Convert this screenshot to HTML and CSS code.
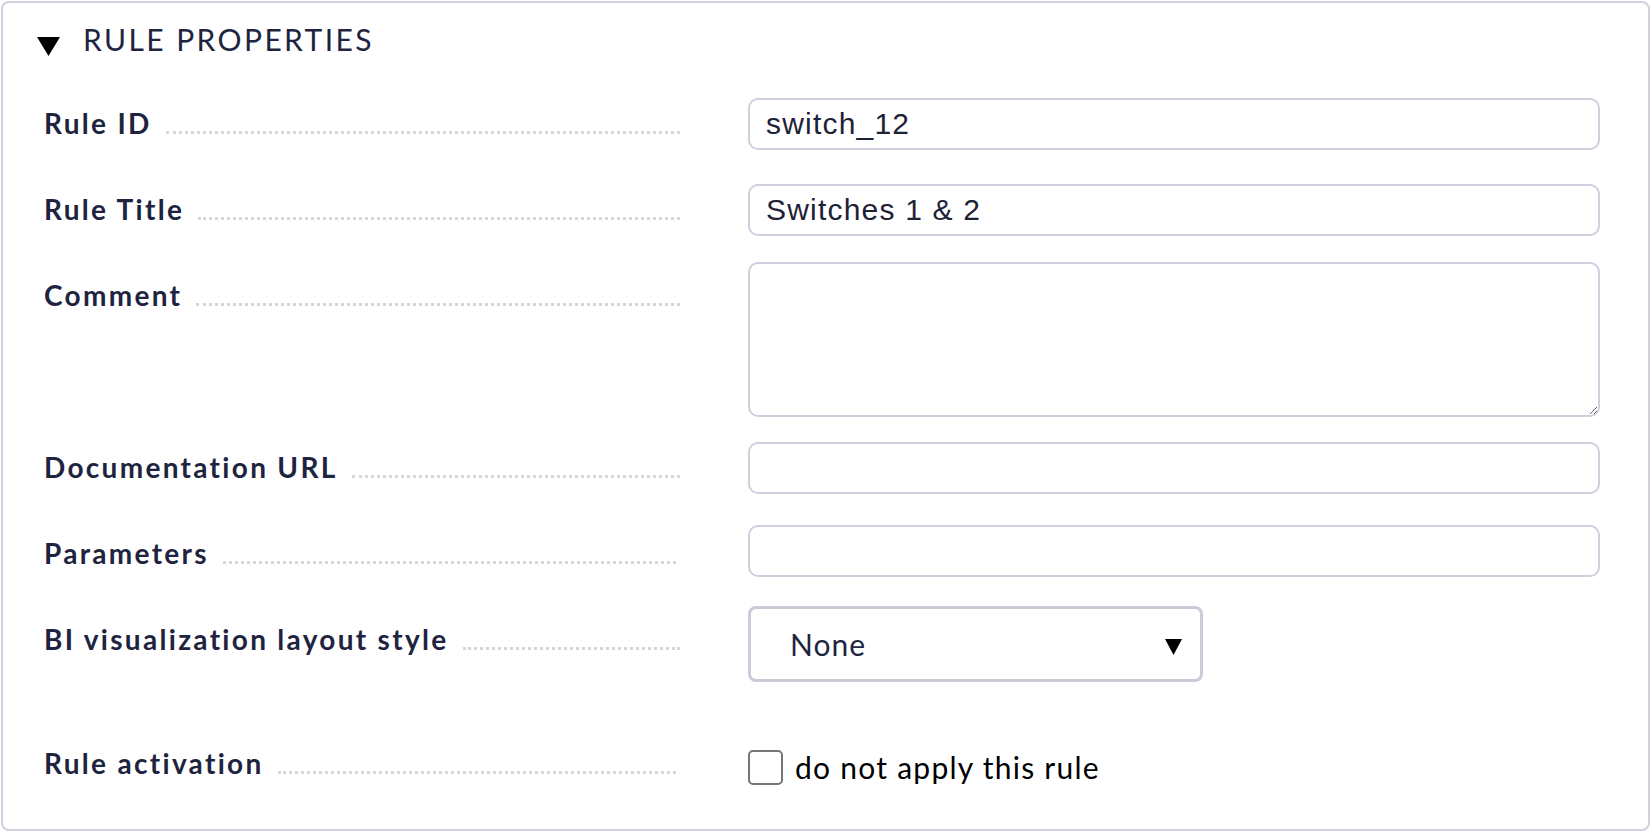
FILE: index.html
```html
<!DOCTYPE html>
<html lang="en">
<head>
<meta charset="utf-8">
<title>Rule properties</title>
<link rel="stylesheet" href="styles.css">
</head>
<body>
<div class="card">
  <div class="header">
    <svg class="caret" width="23" height="19" viewBox="0 0 23 19"><polygon points="0,0 23,0 11.5,19" fill="#000"/></svg>
    <span class="title">RULE PROPERTIES</span>
  </div>
  <div class="form">
    <div class="row">
      <div class="label"><span class="text">Rule ID</span><span class="leader"></span></div>
      <div class="field"><input class="input" type="text" value="switch_12"></div>
    </div>
    <div class="row">
      <div class="label"><span class="text">Rule Title</span><span class="leader"></span></div>
      <div class="field"><input class="input" type="text" value="Switches 1 &amp; 2"></div>
    </div>
    <div class="row row-tall">
      <div class="label"><span class="text">Comment</span><span class="leader"></span></div>
      <div class="field field-flush"><textarea class="textarea"></textarea></div>
    </div>
    <div class="row">
      <div class="label"><span class="text">Documentation URL</span><span class="leader"></span></div>
      <div class="field"><input class="input" type="text" value=""></div>
    </div>
    <div class="row">
      <div class="label label-short"><span class="text">Parameters</span><span class="leader"></span></div>
      <div class="field field-params"><input class="input" type="text" value=""></div>
    </div>
    <div class="row row-select">
      <div class="label"><span class="text">BI visualization layout style</span><span class="leader"></span></div>
      <div class="field field-flush">
        <div class="select-wrap">
          <select class="select"><option>None</option></select>
          <svg class="select-arrow" width="17" height="16" viewBox="0 0 17 16"><polygon points="0,0 17,0 8.5,16" fill="#000"/></svg>
        </div>
      </div>
    </div>
    <div class="row">
      <div class="label label-short"><span class="text">Rule activation</span><span class="leader"></span></div>
      <div class="field field-check">
        <label class="check"><input class="checkbox" type="checkbox"><span class="check-text">do not apply this rule</span></label>
      </div>
    </div>
  </div>
</div>
</body>
</html>
```
FILE: styles.css
```css
html, body {
  margin: 0;
  padding: 0;
  background: #ffffff;
}

body {
  font-family: Lato, "Noto Sans", sans-serif;
  color: #1e2440;
}

.card {
  box-sizing: border-box;
  margin: 1px 0 0 1px;
  height: 830px;
  border: 2px solid #cfd1de;
  border-radius: 8px;
  background: #ffffff;
  padding: 0 0 0 41px;
}

.header {
  display: flex;
  align-items: flex-start;
  height: 69px;
  padding-top: 18px;
  margin-left: -7px;
}

.caret {
  display: block;
  margin-top: 16px;
  flex: none;
}

.title {
  margin-left: 23px;
  font-size: 30px;
  line-height: 36px;
  font-weight: 400;
  letter-spacing: 2.4px;
  color: #1e2440;
}

.row {
  display: grid;
  grid-template-columns: 636px 852px;
  column-gap: 68px;
  align-items: start;
  height: 86px;
}

.row-tall {
  height: 172px;
}

.row-select {
  height: 124px;
}

.label {
  display: flex;
  align-items: baseline;
  padding-top: 16px;
  font-size: 28px;
  line-height: 34px;
  font-weight: 700;
  letter-spacing: 2.3px;
  color: #1e2440;
}

.label-short {
  padding-right: 4px;
}

.text {
  white-space: nowrap;
}

.leader {
  flex: 1;
  height: 0;
  margin-left: 14px;
  margin-bottom: 1px;
  border-bottom: 3px dotted #d6d6d6;
}

.field {
  padding-top: 8px;
}

.field-flush {
  padding-top: 0;
}

.field-params {
  padding-top: 5px;
}

.field-check {
  padding-top: 19px;
}

.input {
  box-sizing: border-box;
  display: block;
  width: 852px;
  height: 52px;
  margin: 0;
  padding: 0 16px;
  border: 2px solid #cdd0dd;
  border-radius: 10px;
  background: #ffffff;
  font-family: "Liberation Sans", Arial, sans-serif;
  font-size: 30px;
  letter-spacing: 1.2px;
  color: #1e2238;
  outline: none;
}

.textarea {
  box-sizing: border-box;
  display: block;
  width: 852px;
  height: 155px;
  margin: 0;
  padding: 8px 16px;
  border: 2px solid #cdd0dd;
  border-radius: 10px;
  background: #ffffff;
  font-family: "Liberation Sans", Arial, sans-serif;
  font-size: 30px;
  color: #1e2238;
  outline: none;
}

.select-wrap {
  position: relative;
  width: 455px;
  height: 76px;
}

.select {
  appearance: none;
  -webkit-appearance: none;
  box-sizing: border-box;
  display: block;
  width: 455px;
  height: 76px;
  margin: 0;
  padding: 0 60px 0 39px;
  border: 3px solid #c9cbd7;
  border-radius: 8px;
  background: #ffffff;
  font-family: Lato, "Noto Sans", sans-serif;
  font-size: 30px;
  letter-spacing: 1px;
  color: #1e2440;
  outline: none;
}

.select-arrow {
  position: absolute;
  left: 417px;
  top: 33px;
  pointer-events: none;
}

.check {
  display: flex;
  align-items: center;
  gap: 12px;
}

.checkbox {
  appearance: none;
  -webkit-appearance: none;
  box-sizing: border-box;
  width: 35px;
  height: 35px;
  margin: 0;
  border: 2px solid #767676;
  border-radius: 5px;
  background: #ffffff;
  flex: none;
}

.check-text {
  font-family: Lato, "Noto Sans", sans-serif;
  font-size: 30px;
  line-height: 36px;
  letter-spacing: 1.25px;
  color: #000000;
  padding-top: 0;
}
```
